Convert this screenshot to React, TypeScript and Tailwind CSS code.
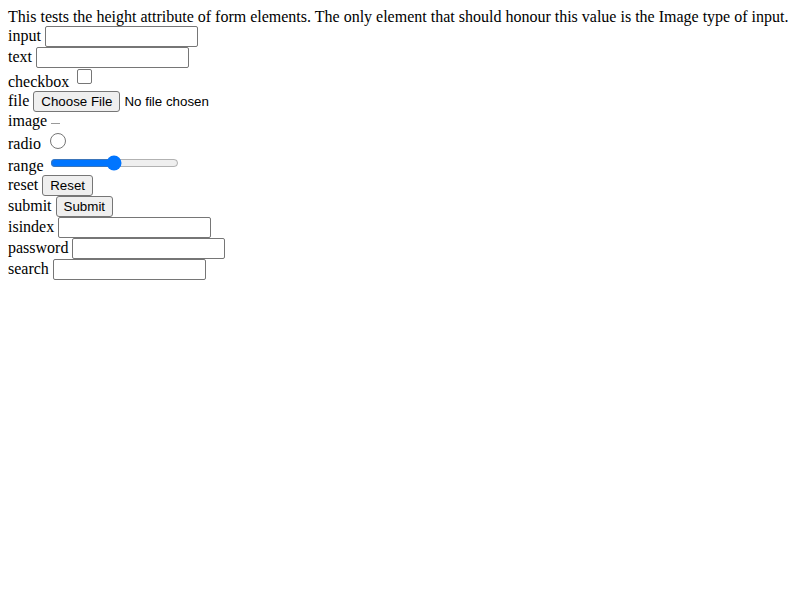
import React from "react";

const field =
  "inline-block align-baseline w-[153px] h-[21px] border border-[#767676] rounded-[2px] bg-white px-[2px] py-[1px] text-[13.333px] leading-[normal] font-['Liberation_Sans',Arial,sans-serif] text-black outline-none";
const btn =
  "inline-block align-baseline h-[21px] px-[7px] py-[1px] border border-[#767676] rounded-[3px] bg-[#efefef] text-[13.333px] leading-[normal] font-['Liberation_Sans',Arial,sans-serif] text-black";

export default function App() {
  return (
    <div className="m-[8px] font-['Liberation_Serif','Times_New_Roman',serif] text-[16px] leading-[normal] text-black">
      This tests the height attribute of form elements. The only element that should honour this value is the Image type of input.
      <br />
      input <input type="text" readOnly className={field} />
      <br />
      text <input type="text" readOnly className={field} />
      <br />
      checkbox{" "}
      <span className="inline-block align-baseline w-[15px] h-[15px] border border-[#767676] rounded-[2px] bg-white mt-[1px] mb-[3px] ml-[4px] mr-[3px]" />
      <br />
      file <button className={btn}>Choose File</button>
      <span className="ml-[4px] text-[13.333px] font-['Liberation_Sans',Arial,sans-serif]">No file chosen</span>
      <br />
      image <span className="inline-block align-baseline w-[9px] h-[1px] bg-[#9a9a9a] mb-[2px]" />
      <br />
      radio{" "}
      <span className="inline-block align-baseline w-[16px] h-[16px] border border-[#767676] rounded-full bg-white mt-[3px] ml-[5px] mr-[3px]" />
      <br />
      range{" "}
      <input type="range" readOnly defaultValue={50} className="align-baseline w-[129px] h-[16px] m-[2px]" />
      <br />
      reset <button className={btn}>Reset</button>
      <br />
      submit <button className={btn}>Submit</button>
      <br />
      isindex <input type="text" readOnly className={field} />
      <br />
      password <input type="password" readOnly className={field} />
      <br />
      search <input type="text" readOnly className={field} />
    </div>
  );
}
